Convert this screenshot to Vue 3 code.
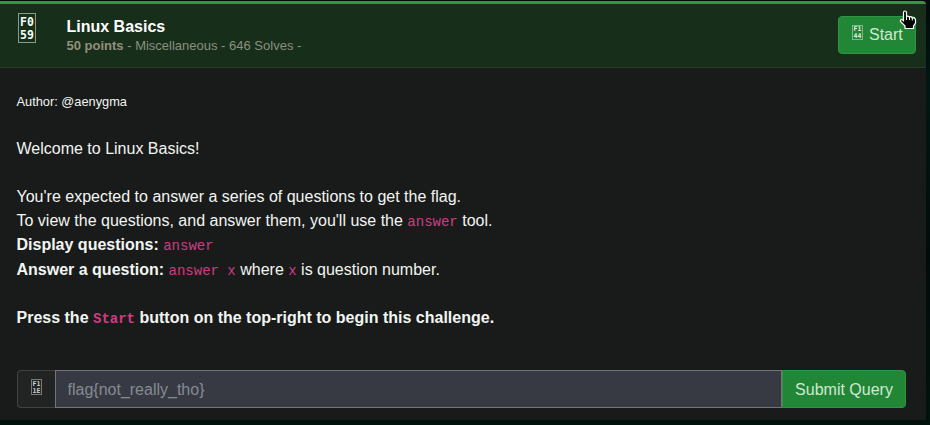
<script setup>
const category = { code: ['F0', '59'] }
const title = 'Linux Basics'
</script>

<template>
  <main class="page">
    <section class="card">
      <header class="head">
        <svg class="category" viewBox="0 0 18 30" width="18" height="30">
          <rect x=".5" y=".5" width="17" height="29" />
          <text v-for="(row, i) in category.code" :key="row" x="2" :y="13 + i * 13">{{ row }}</text>
        </svg>
        <div class="heading">
          <h1>{{ title }}</h1>
          <p><b>50 points</b> - Miscellaneous - 646 Solves -</p>
        </div>
        <button class="start" type="button">
          <svg class="small-icon" viewBox="0 0 11 15" width="11" height="15">
            <rect x=".5" y=".5" width="10" height="14" />
            <text x="1.6" y="6.4">F1</text>
            <text x="1.6" y="13">44</text>
          </svg>
          <span>Start</span>
        </button>
      </header>
      <div class="body">
        <small>Author: @aenygma</small>
        <p>Welcome to Linux Basics!</p>
        <p class="guide">
          You're expected to answer a series of questions to get the flag.<br>
          To view the questions, and answer them, you'll use the <code>answer</code> tool.<br>
          <b>Display questions:</b> <code>answer</code><br>
          <b>Answer a question:</b> <code>answer x</code> where <code>x</code> is question number.
        </p>
        <p><b>Press the <code>Start</code> button on the top-right to begin this challenge.</b></p>
      </div>
      <form class="answer" @submit.prevent>
        <span class="addon">
          <svg class="small-icon" viewBox="0 0 11 16" width="11" height="16">
            <rect x=".5" y=".5" width="10" height="15" />
            <text x="1.6" y="6.9">F1</text>
            <text x="1.6" y="13.6">1E</text>
          </svg>
        </span>
        <input type="text" placeholder="flag{not_really_tho}">
        <button type="submit">Submit Query</button>
      </form>
    </section>
    <svg class="cursor" viewBox="0 0 18 20" width="18" height="20">
      <path d="M4.5 2.5Q4.5 1 6 1T7.5 2.5V6.5Q9 5.5 10.2 7Q12 6.2 13 7.8Q15.5 7 16.5 9.5V13L14.5 16V18.5H6V16L1.5 11.5Q1 9.5 3 9.5L4.5 10.8Z" />
      <path class="fingers" d="M7.5 6.5V10M10.5 7V10M13.3 8V10.5" />
    </svg>
  </main>
</template>

<style>
body { margin: 0; background: #020d0a; }
</style>

<style scoped>
* { box-sizing: border-box; }
.page {
  position: relative;
  width: 930px;
  height: 425px;
  padding-top: 1px;
  overflow: hidden;
  background: linear-gradient(#020b0a, #021713 20%, #020b0a 60%, #01120c);
  font: 16px/24px "Liberation Sans", Arial, sans-serif;
  color: #f2f5f2;
}
.card {
  display: flex;
  flex-direction: column;
  width: 926px;
  height: 419px;
  background: #191b1a;
  border-radius: 0 4px 0 0;
  overflow: hidden;
}
.head {
  display: flex;
  align-items: flex-start;
  height: 67px;
  flex: none;
  padding: 9px 10px 0 18px;
  border-top: 3px solid #33954a;
  border-bottom: 1px solid #2b3a29;
  background: #172e1a;
}
svg { flex: none; display: block; }
.category rect { fill: none; stroke: #8a9c89; }
.category text { fill: #f5fff3; font: bold 11.5px "DejaVu Sans Mono", monospace; }
.heading { margin: 3px 0 0 30.5px; flex: 1; }
h1 { margin: 0; font-size: 16px; line-height: 22px; color: #fff; }
.heading p { margin: 0; font-size: 13px; line-height: 16px; color: #89917f; }
.heading b { color: #948e7d; }
button {
  font: 16px/24px "Liberation Sans", Arial, sans-serif;
  color: #d1e8d0;
  background: #228637;
  border: 1px solid #2c9643;
  padding: 0 12px;
}
.start {
  display: flex;
  align-items: flex-start;
  gap: 6px;
  width: 78px;
  height: 38px;
  margin-top: 3px;
  padding: 6px 0 0 13px;
  border-radius: 4px;
}
.start .small-icon { margin-top: 2px; }
.small-icon rect { fill: none; stroke: #8aaf8b; }
.small-icon text { fill: #e4f4e3; font: bold 6.5px "DejaVu Sans Mono", monospace; }
.body { height: 302px; padding: 22px 16.5px 0; flex: none; }
small { display: block; font-size: 12.8px; }
.body p { margin: 0 0 24px; }
small + p { margin-top: 23px !important; }
.body .guide { line-height: 24.18px; }
code { font: 14px "Liberation Mono", monospace; color: #cf3b82; }
b code { font-weight: bold; }
.answer { display: flex; height: 38px; width: 889px; margin-left: 17px; }
.addon {
  width: 38px;
  padding: 8px 0 0 13px;
  border: 1px solid #3e4341;
  border-right: 0;
  border-radius: 4px 0 0 4px;
  background: #212423;
}
.addon .small-icon rect { stroke: #777b78; }
.addon .small-icon text { fill: #d0d3d0; }
input {
  flex: 1;
  min-width: 0;
  padding: 2px 11.5px 0;
  font: 16px "Liberation Sans", Arial, sans-serif;
  color: #fff;
  background: #373a42;
  border: 1px solid #72767a;
  border-radius: 0;
}
input::placeholder { color: #858b94; opacity: 1; }
.answer button { width: 124px; padding: 2px 0 0; border-radius: 0 4px 4px 0; }
.cursor { position: absolute; left: 899px; top: 10px; }
.cursor path { fill: #000; stroke: #fff; stroke-width: 1.2; }
.cursor .fingers { fill: none; stroke-width: 1; }
</style>
